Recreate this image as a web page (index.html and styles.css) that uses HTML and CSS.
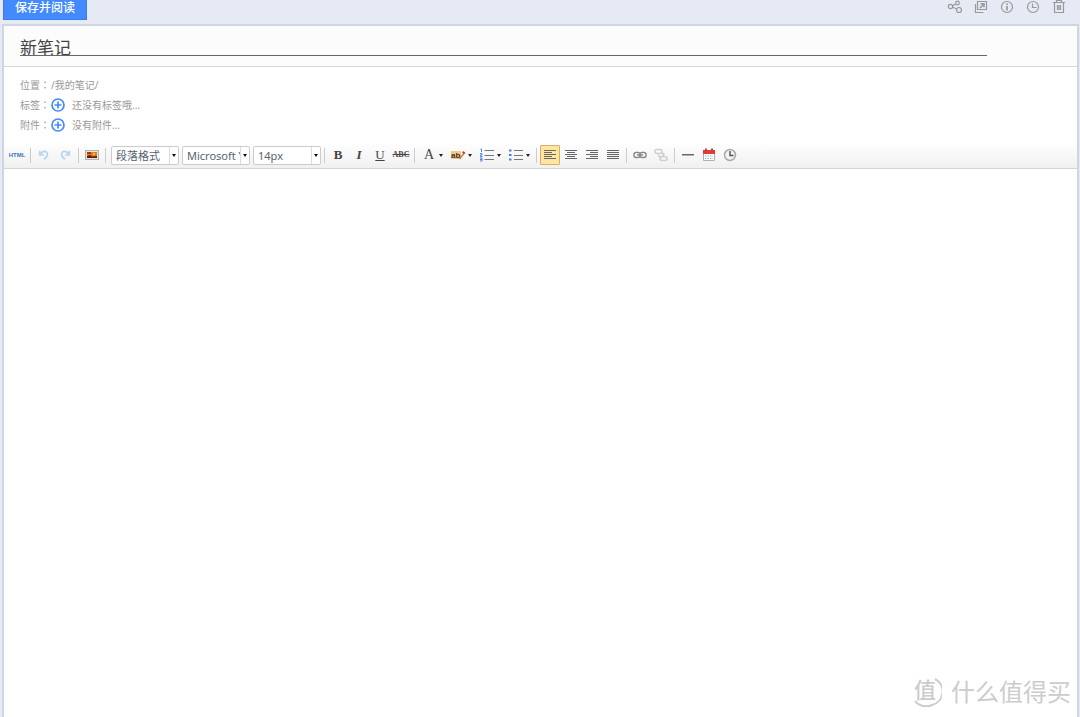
FILE: index.html
```html
<!DOCTYPE html>
<html lang="zh-CN">
<head>
<meta charset="utf-8">
<title>新笔记</title>
<link rel="stylesheet" href="styles.css">
</head>
<body>
<header class="topbar">
  <button class="save" type="button">保存并阅读</button>
  <nav class="actions">
    <button class="action" type="button" aria-label="分享"><svg width="16" height="14" viewBox="0 0 16 14"><circle cx="3.5" cy="6.5" r="2.2"/><circle cx="10.5" cy="3" r="1.8"/><circle cx="12" cy="10" r="2.5"/><path d="M5.6 5.6 8.7 4M5.8 7.3 9.6 9"/></svg></button>
    <button class="action" type="button" aria-label="新窗口"><svg width="14" height="14" viewBox="0 0 14 14"><path d="M3.500 1.500h9v8h-9zM1.500 4v8.500H9.500"/><path d="M6 8l4-4M6.500 3.700h3.500v3.500" stroke-width="1.600"/></svg></button>
    <button class="action" type="button" aria-label="信息"><svg width="14" height="14" viewBox="0 0 14 14"><circle cx="7" cy="7" r="5.500"/><path d="M7 6v4.500M7 3.500v1.500" stroke-width="1.700"/></svg></button>
    <button class="action" type="button" aria-label="历史"><svg width="14" height="14" viewBox="0 0 14 14"><circle cx="7" cy="7" r="5.500"/><path d="M6.500 3.500v4H10.500"/></svg></button>
    <button class="action" type="button" aria-label="删除"><svg width="14" height="14" viewBox="0 0 14 14"><path d="M1 2.500h12M4.500 2V.5h5V2M2.500 3v9.500h9V3M5.500 5v5M7 5v5M8.500 5v5"/></svg></button>
  </nav>
</header>
<main class="note">
  <div class="heading"><input class="title" type="text" value="新笔记" aria-label="标题"></div>
  <section class="meta">
    <div class="row"><span>位置<b class="colon" lang="zh-TW">：</b></span><span>/我的笔记/</span></div>
    <div class="row"><span>标签<b class="colon" lang="zh-TW">：</b></span><button class="add" type="button" aria-label="添加标签"><svg width="14" height="14" viewBox="0 0 14 14"><circle cx="7" cy="7" r="6"/><path d="M7 3.500v7M3.500 7h7"/></svg></button><span>还没有标签哦...</span></div>
    <div class="row"><span>附件<b class="colon" lang="zh-TW">：</b></span><button class="add" type="button" aria-label="添加附件"><svg width="14" height="14" viewBox="0 0 14 14"><circle cx="7" cy="7" r="6"/><path d="M7 3.500v7M3.500 7h7"/></svg></button><span>没有附件...</span></div>
  </section>
  <div class="toolbar" role="toolbar">
    <button class="tool html" type="button">HTML</button>
    <i class="sep"></i>
    <button class="tool" type="button" aria-label="撤销"><svg width="12" height="12" viewBox="0 0 14 14" fill="none" stroke="#b9d5ee" stroke-width="2"><path d="M2 2v5h5M2.500 6.500C5 2 11 1.500 11 6c0 3-2 4.500-4 6"/></svg></button>
    <button class="tool" type="button" aria-label="重做"><svg width="12" height="12" viewBox="0 0 14 14" fill="none" stroke="#b9d5ee" stroke-width="2"><path d="M12 2v5H7M11.500 6.500C9 2 3 1.500 3 6c0 3 2 4.500 4 6"/></svg></button>
    <i class="sep"></i>
    <button class="tool" type="button" aria-label="图片"><svg width="14" height="12" viewBox="0 0 14 12"><path fill="#aab4bd" d="M0 1h14v10H0z"/><path fill="#f5e3d0" d="M1 2h12v8H1z"/><path fill="#e8761c" d="M2 3h10v6H2z"/><path fill="#a93b12" d="M2 3h4v2H2z"/><path fill="#ffc04d" d="M8 4h2v2H8z"/><path fill="#5b2110" d="M2 7l3-1 2 1.500L12 7v2H2z"/></svg></button>
    <i class="sep"></i>
    <label class="combo"><select aria-label="段落格式"><option>段落格式</option></select></label>
    <label class="combo"><select aria-label="字体"><option>Microsoft YaHei</option></select></label>
    <label class="combo"><select aria-label="字号"><option>14px</option></select></label>
    <i class="sep"></i>
    <button class="tool glyph bold" type="button">B</button>
    <button class="tool glyph italic" type="button">I</button>
    <button class="tool glyph under" type="button">U</button>
    <button class="tool glyph strike" type="button">ABC</button>
    <i class="sep"></i>
    <button class="tool glyph split" type="button">A</button>
    <button class="tool split" type="button" aria-label="背景色"><svg width="15" height="14" viewBox="0 0 15 14"><path fill="#f8c880" d="M0 3h10v8H0z"/><text class="ab" x="0" y="10">ab</text><path d="M8.500 11 12.500 6" stroke="#b98a4a" stroke-width="1.500"/><path d="M12 5.500l1.500-1.500" stroke="#e02c2c" stroke-width="2.500"/></svg></button>
    <button class="tool split" type="button" aria-label="有序列表"><svg width="14" height="14" viewBox="0 0 14 14"><path d="M4.500 2.500H14M4.500 7.500H14M4.500 11.500H14" stroke="#777"/><path d="M.5 1h1v3M0 5.500h2v1.500H.5v1.500H2.500M0 10h2v3H0M0 11.500h2" fill="none" stroke="#4b83ec"/></svg></button>
    <button class="tool split" type="button" aria-label="无序列表"><svg width="14" height="14" viewBox="0 0 14 14"><path d="M5 2.500H14M5 7.500H14M5 11.500H14" stroke="#777"/><path d="M0 1.500h2.500v2H0zM0 6h2.500v2H0zM0 10.500h2.500v2H0z" fill="#4b7bf0"/></svg></button>
    <i class="sep"></i>
    <button class="tool lines active" type="button" aria-label="左对齐"><svg width="12" height="10" viewBox="0 0 12 10"><path d="M0 .5h12M0 2.500h8M0 4.500h12M0 6.500h8M0 8.500h12"/></svg></button>
    <button class="tool lines" type="button" aria-label="居中"><svg width="12" height="10" viewBox="0 0 12 10"><path d="M0 .5h12M2 2.500h8M0 4.500h12M2 6.500h8M0 8.500h12"/></svg></button>
    <button class="tool lines" type="button" aria-label="右对齐"><svg width="12" height="10" viewBox="0 0 12 10"><path d="M0 .5h12M4 2.500h8M0 4.500h12M4 6.500h8M0 8.500h12"/></svg></button>
    <button class="tool lines" type="button" aria-label="两端对齐"><svg width="12" height="10" viewBox="0 0 12 10"><path d="M0 .5h12M0 2.500h12M0 4.500h12M0 6.500h12M0 8.500h12"/></svg></button>
    <i class="sep"></i>
    <button class="tool" type="button" aria-label="链接"><svg width="14" height="8" viewBox="0 0 14 8" fill="none" stroke="#8b8b8b" stroke-width="1.500"><rect x="1" y="1.500" width="6" height="5" rx="2"/><rect x="7" y="1.500" width="6" height="5" rx="2"/><path d="M4 4h6"/></svg></button>
    <button class="tool" type="button" aria-label="取消链接"><svg width="14" height="14" viewBox="0 0 14 14" fill="none" stroke="#cfcfcf" stroke-width="1.500"><rect x="1" y="1.500" width="7" height="4" rx="2"/><rect x="6" y="8.500" width="7" height="4" rx="2"/><path d="M7 4.500l3 1.500-2 3M4 7l3 3"/></svg></button>
    <i class="sep"></i>
    <button class="tool" type="button" aria-label="分隔线"><svg width="12" height="2" viewBox="0 0 12 2"><path fill="#666" d="M0 0h12v1.500H0z"/></svg></button>
    <button class="tool" type="button" aria-label="日期"><svg width="14" height="14" viewBox="0 0 14 14"><path fill="#fff" stroke="#a9b1ba" d="M1.500 4.500h11v8h-11z"/><path fill="#e23b36" d="M1 2h12v4H1z"/><path stroke="#c8403a" stroke-width="2" d="M4 .5v3M10 .5v3"/><path stroke="#9db0c4" stroke-dasharray="1.500 1" d="M3 8h8M3 10.500h8"/></svg></button>
    <button class="tool" type="button" aria-label="时间"><svg width="14" height="14" viewBox="0 0 14 14" fill="none"><circle cx="7" cy="7" r="5.500" fill="#f1f4f7" stroke="#aaa" stroke-width="1.500"/><path d="M7 3v4.500h3.500" stroke="#555" stroke-width="1.500"/></svg></button>
  </div>
  <div class="editor" contenteditable="true" aria-label="正文"></div>
</main>
<div class="watermark">
  <svg width="30" height="32" viewBox="0 0 30 32"><path d="M23 4a14 14 0 0 1-3 26A14 14 0 0 1 3 26" fill="none" stroke="#ccc" stroke-width="2"/></svg>
  <span class="seal">值</span>
  <span>什么值得买</span>
</div>
</body>
</html>
```

FILE: styles.css
```css
* { box-sizing: border-box; }
body {
  margin: 0;
  min-height: 100vh;
  display: flex;
  flex-direction: column;
  position: relative;
  background: #e6eaf5;
  font: 11px/20px "Noto Sans", "Noto Sans CJK SC", sans-serif;
  color: #999;
}
button { border: 0; padding: 0; background: none; font: inherit; color: inherit; }
svg { display: block; }
.topbar {
  display: flex;
  justify-content: space-between;
  align-items: flex-start;
  height: 24px;
  padding: 0 14px 0 3px;
}
.save {
  width: 84px;
  height: 20px;
  padding-bottom: 4px;
  background: #448aff;
  border: solid #397be8;
  border-width: 0 1px 1px;
  color: #fff;
  font-size: 12px;
  line-height: 13px;
  font-weight: 500;
}
.actions { display: flex; gap: 12px; }
.action { width: 14px; display: flex; justify-content: center; }
.action svg { flex: none; fill: none; stroke: #999; stroke-width: 1.2; }
.note {
  flex: 1;
  display: flex;
  flex-direction: column;
  margin: 0 1px 0 2px;
  border: 2px solid #d0d5e2;
  border-bottom: 0;
  background: #fff;
}
.heading {
  height: 41px;
  padding: 10px 90px 0 16px;
  background: #fcfcfc;
  border-bottom: 1px solid #d6d6da;
}
.title {
  display: block;
  width: 100%;
  height: 20px;
  padding: 2px 0 0;
  border: 0;
  border-bottom: 1px solid #666;
  border-radius: 0;
  background: none;
  color: #444;
  font: 17px/17px "Noto Sans CJK SC", sans-serif;
}
.meta { padding: 8px 16px 7px; }
.row { display: flex; align-items: center; height: 20px; font-size: 10px; }
.row > span:first-child { width: 31px; white-space: nowrap; }
.colon { font-family: "Noto Sans CJK TC", sans-serif; font-weight: normal; }
.add { margin-right: 7px; }
.add svg { fill: none; stroke: #448aff; stroke-width: 1.7; }
.toolbar {
  display: flex;
  align-items: center;
  gap: 1px;
  height: 27px;
  padding: 0 3px;
  background: linear-gradient(#fff, #f0f0f0);
  border-bottom: 1px solid #d4d4d4;
}
.tool {
  display: flex;
  align-items: center;
  justify-content: center;
  width: 20px;
  height: 20px;
  flex: none;
  color: #444;
}
.html { color: #3977b0; font: bold 6px/20px "Liberation Sans", sans-serif; }
.sep { width: 1px; height: 15px; margin: 0 2px; flex: none; background: #ccc; }
.combo {
  display: flex;
  flex: none;
  width: 68px;
  height: 19px;
  margin-left: 2px;
  border: 1px solid #ccc;
  border-radius: 2px;
  background: #fff;
}
.combo select {
  appearance: none;
  width: 58px;
  height: 17px;
  padding: 0 0 0 4px;
  border: 0;
  border-right: 1px solid #ddd;
  border-radius: 0;
  background: none;
  color: #566270;
  font: 11px/17px "Noto Sans", "Noto Sans CJK SC", sans-serif;
  text-overflow: clip;
}
.combo::after {
  content: "";
  align-self: center;
  margin-left: 2px;
  border: 2px solid transparent;
  border-top: 3px solid #111;
  border-bottom: 0;
}
.glyph { font: 13px/20px "Liberation Serif", serif; }
.bold { font-weight: bold; }
.italic { font-style: italic; font-weight: bold; }
.under { text-decoration: underline; }
.strike { font-size: 8px; font-weight: bold; text-decoration: line-through; }
.split { width: 28px; justify-content: space-between; padding: 0 3px 0 4px; }
.split.glyph { padding-left: 6px; font-size: 14px; }
.split::after {
  content: "";
  border: 2px solid transparent;
  border-top: 3px solid #222;
  border-bottom: 0;
}
.ab { font: bold 8px "Liberation Sans", sans-serif; fill: #333; }
.lines svg { fill: none; stroke: #666; }
.active { background: #ffe69f; border: 1px solid #dcac6c; border-radius: 1px; }
.editor { flex: 1; outline: 0; }
.watermark {
  position: absolute;
  right: 9px;
  bottom: 10px;
  display: grid;
  grid-template-columns: 30px auto;
  align-items: center;
  column-gap: 9px;
  color: #ccc;
  font: 24px/32px "Noto Sans CJK SC", sans-serif;
}
.watermark svg, .seal { grid-area: 1 / 1; }
.seal { align-self: start; padding-left: 2px; font-size: 22px; line-height: 26px; font-weight: 500; }
```
